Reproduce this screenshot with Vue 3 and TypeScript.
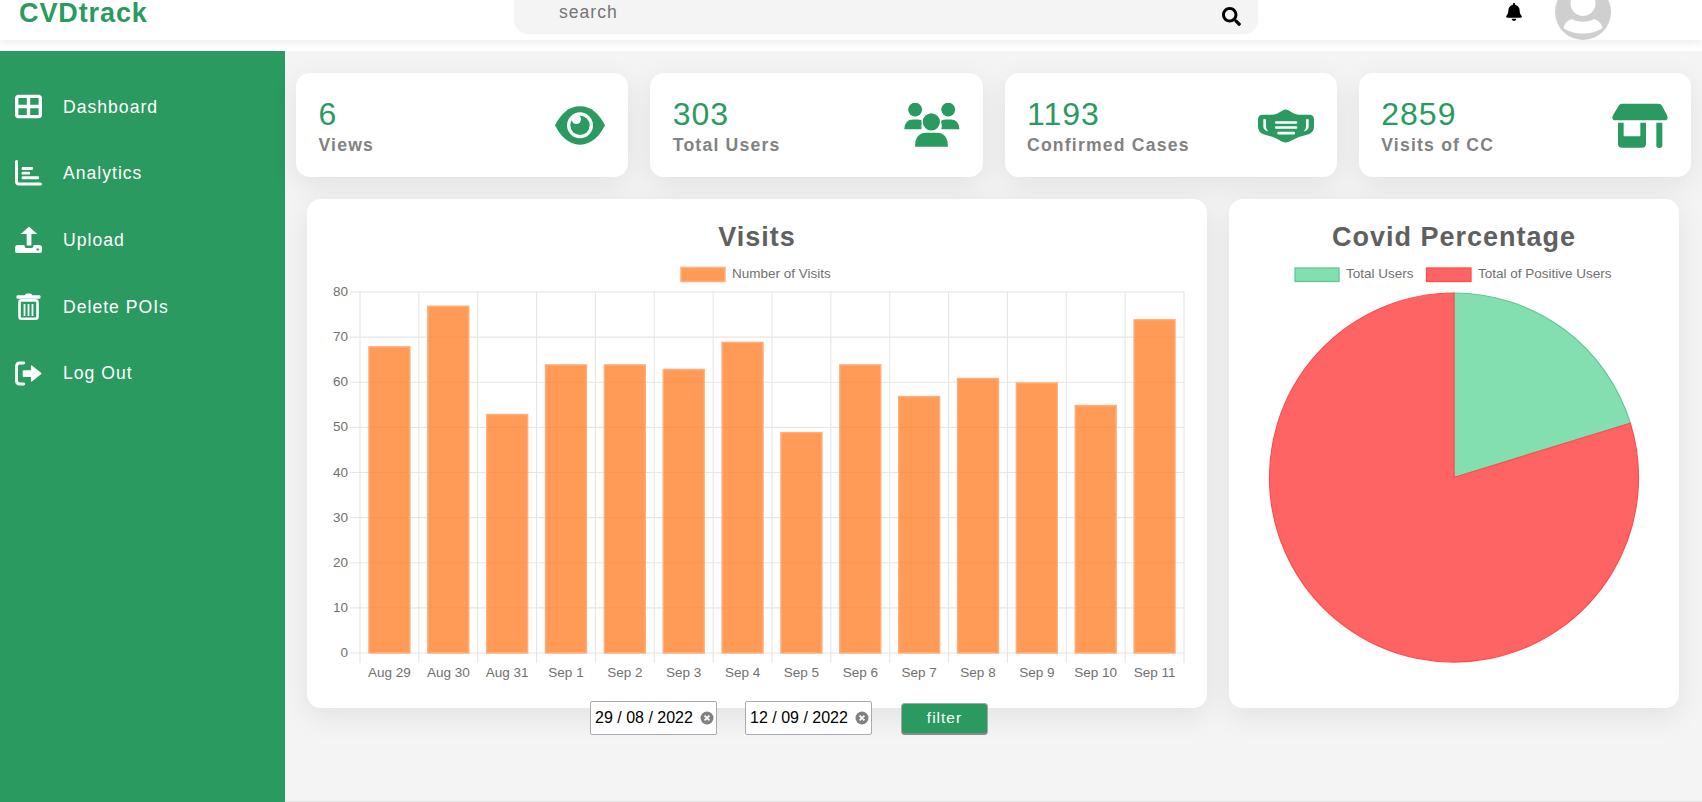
<template>
  <div class="page">
    <header class="topbar">
      <div class="logo">CVDtrack</div>
      <div class="search">
        <span class="search-text">search</span>
        <svg class="search-icon" viewBox="0 0 512 512"><path d="M505 442.7L405.3 343c-4.5-4.5-10.6-7-17-7H372c27.6-35.3 44-79.7 44-128C416 93.1 322.9 0 208 0S0 93.1 0 208s93.1 208 208 208c48.3 0 92.7-16.4 128-44v16.3c0 6.4 2.5 12.5 7 17l99.7 99.7c9.4 9.4 24.6 9.4 33.9 0l28.3-28.3c9.4-9.4 9.4-24.6.1-34zM208 336c-70.7 0-128-57.2-128-128 0-70.7 57.2-128 128-128 70.7 0 128 57.2 128 128 0 70.7-57.2 128-128 128z" /></svg>
      </div>
      <svg class="bell" viewBox="0 0 448 512"><path d="M224 512c35.32 0 63.97-28.65 63.97-64H160.03c0 35.35 28.65 64 63.97 64zm215.39-149.71c-19.32-20.76-55.47-51.99-55.47-154.29 0-77.7-54.48-139.9-127.94-155.16V32c0-17.67-14.32-32-31.98-32s-31.98 14.33-31.98 32v20.84C118.56 68.1 64.08 130.3 64.08 208c0 102.3-36.15 133.53-55.47 154.29-6 6.45-8.66 14.16-8.61 21.71.11 16.4 12.98 32 32.1 32h383.8c19.12 0 32-15.6 32.1-32 .05-7.55-2.61-15.27-8.61-21.71z" /></svg>
      <svg class="avatar" viewBox="0 16 56 40">
        <circle cx="28" cy="28" r="28" fill="#cfcfcf" />
        <circle cx="28" cy="19.5" r="12.5" fill="#fff" />
        <path d="M8.5 44 C9.5 39 13 36 17 35 C22 38.5 34 38.5 39 35 C43 36 46.5 39 47.5 44 C43 47.5 36 49.5 28 49.5 C20 49.5 13 47.5 8.5 44Z" fill="#fff" />
      </svg>
    </header>

    <div class="layout">
      <aside class="sidebar">
        <a class="nav-item">
          <svg class="nav-icon" viewBox="0 32 512 448"><path fill="#fff" d="M448 96V224H288V96H448zm0 192V416H288V288H448zM224 224H64V96H224V224zM64 288H224V416H64V288zM64 32C28.7 32 0 60.7 0 96V416c0 35.3 28.7 64 64 64H448c35.3 0 64-28.7 64-64V96c0-35.3-28.7-64-64-64H64z" /></svg>
          <span>Dashboard</span>
        </a>
        <a class="nav-item">
          <svg class="nav-icon" viewBox="0 0 27 24">
            <path d="M1.5 0V20Q1.5 22.5 4 22.5H25.5" fill="none" stroke="#fff" stroke-width="3" stroke-linecap="round" />
            <rect x="6.6" y="5.6" width="11.5" height="2.9" rx="1.2" fill="#fff" />
            <rect x="6.6" y="10.2" width="8.5" height="2.9" rx="1.2" fill="#fff" />
            <rect x="6.6" y="14.8" width="17.5" height="3" rx="1.2" fill="#fff" />
          </svg>
          <span>Analytics</span>
        </a>
        <a class="nav-item">
          <svg class="nav-icon" viewBox="0 0 27 27">
            <path d="M14 .7L22.3 8H16.4V19.5H11.7V8H5.7Z" fill="#fff" />
            <path d="M0 22Q0 19 3 19H9.5V20Q9.5 22 11.5 22H16.5Q18.5 22 18.5 20V19H24Q27 19 27 22V25Q27 27 25 27H2Q0 27 0 25Z" fill="#fff" />
            <circle cx="22.7" cy="23.4" r="1.2" fill="#2a9a61" />
          </svg>
          <span>Upload</span>
        </a>
        <a class="nav-item">
          <svg class="nav-icon" viewBox="0 0 24 27">
            <rect x="0" y="2.2" width="24" height="3.6" rx="1.2" fill="#fff" />
            <path d="M8 3Q8.5 .6 10.5 .6H13.5Q15.5 .6 16 3Z" fill="#fff" />
            <rect x="3" y="7.4" width="18" height="18.3" rx="2" fill="none" stroke="#fff" stroke-width="2.6" />
            <path d="M8 11V23M12 11V23M16 11V23" stroke="#fff" stroke-width="1.8" />
          </svg>
          <span>Delete POIs</span>
        </a>
        <a class="nav-item">
          <svg class="nav-icon" viewBox="0 0 28 25">
            <path d="M9 1.6H5Q1.6 1.6 1.6 5V20Q1.6 23.4 5 23.4H9" fill="none" stroke="#fff" stroke-width="3" stroke-linecap="round" />
            <path d="M9 9H16.5V4.6Q16.5 3.6 17.5 4.2L27 11.6Q28 12.5 27 13.4L17.5 20.8Q16.5 21.4 16.5 20.4V16H9Q8 16 8 15V10Q8 9 9 9Z" fill="#fff" />
          </svg>
          <span>Log Out</span>
        </a>
      </aside>

      <main class="content">
        <section class="stats">
          <div class="stat-card">
            <div class="stat-text">
              <div class="stat-num">6</div>
              <div class="stat-label">Views</div>
            </div>
            <svg class="stat-icon" width="50" height="39" viewBox="45 47 150 117">
              <path d="M45 105C62 72 85 48 120 48C155 48 178 72 195 105C178 138 155 163 120 163C85 163 62 138 45 105Z" fill="#2a9a61" />
              <circle cx="120" cy="105" r="39" fill="#fff" />
              <circle cx="120" cy="105" r="29" fill="#2a9a61" />
              <circle cx="109" cy="87" r="14" fill="#fff" />
            </svg>
          </div>
          <div class="stat-card">
            <div class="stat-text">
              <div class="stat-num">303</div>
              <div class="stat-label">Total Users</div>
            </div>
            <svg class="stat-icon" width="56" height="44" viewBox="40 40 168 133">
              <circle cx="73" cy="60" r="21" fill="#2a9a61" />
              <circle cx="173" cy="60" r="21" fill="#2a9a61" />
              <path d="M40 119Q42 90 66 90H82Q92 90 96 95Q90 105 92 119Z" fill="#2a9a61" />
              <path d="M207 119Q205 90 181 90H165Q155 90 150 95Q156 105 152 119Z" fill="#2a9a61" />
              <circle cx="122" cy="97" r="28" fill="#2a9a61" stroke="#fff" stroke-width="4" />
              <path d="M73 172Q72 130 108 130H138Q172 130 172 172Z" fill="#2a9a61" />
            </svg>
          </div>
          <div class="stat-card">
            <div class="stat-text">
              <div class="stat-num">1193</div>
              <div class="stat-label">Confirmed Cases</div>
            </div>
            <svg class="stat-icon mask" width="56" height="34" viewBox="52 55 168 101">
              <path d="M135 56C125 56 110 72 95 72H66Q52 72 52 86V108Q52 125 68 130L95 138C110 142 122 155 135 155C148 155 162 142 177 138L204 130Q220 125 220 108V86Q220 72 206 72H175C160 72 145 56 135 56Z" fill="#2a9a61" />
              <path d="M68 85H76V108Q76 117 83 122L74 118Q68 115 68 108Z" fill="#fff" />
              <path d="M204 85H196V108Q196 117 189 122L198 118Q204 115 204 108Z" fill="#fff" />
              <rect x="103" y="91" width="67" height="8" rx="3" fill="#fff" />
              <rect x="103" y="106" width="67" height="8" rx="3" fill="#fff" />
              <rect x="110" y="123" width="53" height="8" rx="3" fill="#fff" />
            </svg>
          </div>
          <div class="stat-card">
            <div class="stat-text">
              <div class="stat-num">2859</div>
              <div class="stat-label">Visits of CC</div>
            </div>
            <svg class="stat-icon" width="56" height="45" viewBox="65 38 168 135">
              <path d="M95 40H205Q212 40 215 46L230 75Q236 90 222 90H76Q62 90 68 75L85 46Q88 40 95 40Z" fill="#2a9a61" />
              <path d="M83 97H100V138H150V97H167V160Q167 172 155 172H95Q83 172 83 160Z" fill="#2a9a61" />
              <path d="M198 97H216V165Q216 173 207 173Q198 173 198 165Z" fill="#2a9a61" />
            </svg>
          </div>
        </section>

        <section class="charts">
          <div class="chart-card">
            <h2 class="chart-title">Visits</h2>
            <svg class="chart-svg" width="900" height="454" viewBox="0 0 900 454">
              <rect x="374" y="13.5" width="44" height="14" fill="#ff9a57" stroke="#ffae7d" stroke-width="1.5" />
              <text x="425" y="23.5" class="chart-text">Number of Visits</text>

              <g v-for="t in yTicks" :key="t.value">
                <line x1="43" :x2="plot.right" :y1="t.y" :y2="t.y" class="grid" />
                <text x="41" :y="t.y + 4" text-anchor="end" class="chart-text">{{ t.value }}</text>
              </g>
              <g v-for="(label, i) in xLabels" :key="label">
                <line :x1="xAt(i)" :x2="xAt(i)" :y1="plot.top" :y2="plot.bottom + 10" class="grid" />
                <text :x="xAt(i) + step / 2" y="423" text-anchor="middle" class="chart-text">{{ label }}</text>
              </g>
              <line :x1="plot.right" :x2="plot.right" :y1="plot.top" :y2="plot.bottom + 10" class="grid" />

              <rect
                v-for="b in bars"
                :key="b.x"
                :x="b.x"
                :y="b.y"
                :width="b.w"
                :height="b.h"
                fill="rgba(255,129,45,0.8)"
                stroke="#ffae7d"
                stroke-width="1.4"
              />
            </svg>
          </div>

          <div class="chart-card">
            <h2 class="chart-title">Covid Percentage</h2>
            <svg class="chart-svg" width="450" height="454" viewBox="0 0 450 454">
              <rect x="66" y="14" width="44" height="13.5" fill="#84dfb0" stroke="#62c795" stroke-width="1.3" />
              <text x="117" y="23.5" class="chart-text">Total Users</text>
              <rect x="197.5" y="14" width="44.5" height="13.5" fill="#ff6464" stroke="#ff4d4d" stroke-width="1.3" />
              <text x="249" y="23.5" class="chart-text">Total of Positive Users</text>

              <path :d="greenSlice" fill="#84dfb0" stroke="#62c795" stroke-width="1.2" />
              <path :d="redSlice" fill="#ff6464" stroke="#ff4d4d" stroke-width="1.2" />
            </svg>
          </div>
        </section>

        <div class="filters">
          <div class="date-field">
            <span>29 / 08 / 2022</span>
            <svg class="clear" viewBox="0 0 14 14"><circle cx="7" cy="7" r="6.5" fill="#808080" /><path d="M4.6 4.6L9.4 9.4M9.4 4.6L4.6 9.4" stroke="#fff" stroke-width="1.8" /></svg>
          </div>
          <div class="date-field">
            <span>12 / 09 / 2022</span>
            <svg class="clear" viewBox="0 0 14 14"><circle cx="7" cy="7" r="6.5" fill="#808080" /><path d="M4.6 4.6L9.4 9.4M9.4 4.6L4.6 9.4" stroke="#fff" stroke-width="1.8" /></svg>
          </div>
          <button class="filter-btn">filter</button>
        </div>
      </main>
    </div>
  </div>
</template>

<script setup lang="ts">
const visits = [68, 77, 53, 64, 64, 63, 69, 49, 64, 57, 61, 60, 55, 74]
const xLabels = [
  'Aug 29', 'Aug 30', 'Aug 31', 'Sep 1', 'Sep 2', 'Sep 3', 'Sep 4',
  'Sep 5', 'Sep 6', 'Sep 7', 'Sep 8', 'Sep 9', 'Sep 10', 'Sep 11'
]

// plot area inside the bar chart svg
const plot = { left: 53, right: 877, top: 38, bottom: 399 }
const step = (plot.right - plot.left) / visits.length
const xAt = (i: number) => plot.left + step * i
const yAt = (v: number) => plot.bottom - ((plot.bottom - plot.top) * v) / 80

const yTicks = [0, 10, 20, 30, 40, 50, 60, 70, 80].map((value) => ({ value, y: yAt(value) }))

// stroke sits inside the bar, so pull the rect in by half its width
const inset = 0.7
const bars = visits.map((v, i) => ({
  x: xAt(i) + step * 0.14 + inset,
  y: yAt(v) + inset,
  w: step * 0.72 - inset * 2,
  h: plot.bottom - yAt(v) - inset
}))

// pie
const cx = 225
const cy = 223.5
const r = 184.5
const share = 303 / (303 + 1193)
const endAngle = share * Math.PI * 2
const ex = cx + r * Math.sin(endAngle)
const ey = cy - r * Math.cos(endAngle)
const greenSlice = `M${cx} ${cy}L${cx} ${cy - r}A${r} ${r} 0 0 1 ${ex} ${ey}Z`
const redSlice = `M${cx} ${cy}L${ex} ${ey}A${r} ${r} 0 1 1 ${cx} ${cy - r}Z`
</script>

<style scoped>
.page {
  display: flex;
  flex-direction: column;
  height: 802px;
  overflow: hidden;
  background: #fff;
  font-family: "Liberation Sans", Arial, sans-serif;
}

.topbar {
  position: relative;
  z-index: 2;
  flex: 0 0 40px;
  display: flex;
  align-items: flex-start;
  padding-left: 19px;
  background: #fff;
  box-shadow: 0 1px 10px rgba(0, 0, 0, 0.1);
}

.logo {
  flex: 0 0 495px;
  font-size: 27px;
  font-weight: 700;
  line-height: 26px;
  letter-spacing: 0.9px;
  color: #2a9a61;
}

.search {
  flex: 0 0 744px;
  height: 34px;
  display: flex;
  align-items: flex-start;
  justify-content: space-between;
  padding: 0 17px 0 45px;
  box-sizing: border-box;
  background: #f4f4f4;
  border-radius: 0 0 14px 14px;
}

.search-text {
  font-size: 17.6px;
  line-height: 24px;
  letter-spacing: 1px;
  color: #757575;
}

.search-icon {
  width: 19px;
  height: 19px;
  margin-top: 7px;
}

.bell {
  width: 16px;
  height: 18px;
  margin: 3px 0 0 248px;
}

.avatar {
  width: 56px;
  height: 40px;
  margin-left: 33px;
}

.layout {
  flex: 1;
  display: flex;
  margin-top: 11px;
  min-height: 0;
}

.sidebar {
  flex: 0 0 285px;
  padding: 23px 0 0 15px;
  box-sizing: border-box;
  background: #2a9a61;
}

.nav-item {
  display: flex;
  align-items: center;
  gap: 21px;
  height: 66.6px;
  font-size: 17.6px;
  letter-spacing: 1px;
  color: #fff;
}

.nav-icon {
  flex: 0 0 27px;
  width: 27px;
  height: 27px;
  margin-top: -1px;
}

.content {
  flex: 1;
  min-width: 0;
  padding: 22px 11px 0;
  background: #f4f4f4;
  border-bottom: 1px solid #e0e0e0;
}

.stats {
  display: grid;
  grid-template-columns: repeat(4, 1fr);
  gap: 22px;
}

.stat-card {
  display: flex;
  align-items: center;
  justify-content: space-between;
  height: 104px;
  padding: 0 23px 0 22.5px;
  box-sizing: border-box;
  background: #fff;
  border-radius: 14px;
  box-shadow: 0 8px 30px rgba(0, 0, 0, 0.08);
}

.stat-icon.mask {
  margin-top: 2px;
}

.stat-num {
  font-size: 32px;
  line-height: 37px;
  letter-spacing: 1px;
  color: #2a9a61;
}

.stat-label {
  margin-top: 2px;
  font-size: 17.6px;
  font-weight: 700;
  line-height: 20px;
  letter-spacing: 1.2px;
  color: #828282;
}

.charts {
  display: grid;
  grid-template-columns: 900px 450px;
  gap: 22px;
  margin: 22px 0 0 11px;
}

.chart-card {
  height: 509px;
  background: #fff;
  border-radius: 14px;
  box-shadow: 0 8px 30px rgba(0, 0, 0, 0.08);
}

.chart-title {
  margin: 0;
  padding-top: 21px;
  height: 34px;
  font-size: 27px;
  font-weight: 700;
  line-height: 34px;
  letter-spacing: 1px;
  text-align: center;
  color: #606060;
}

.chart-svg {
  display: block;
}

.chart-text {
  font-family: "Liberation Sans", Arial, sans-serif;
  font-size: 13.5px;
  fill: #707070;
}

.grid {
  stroke: #e6e6e6;
  stroke-width: 1.1;
}

.filters {
  position: relative;
  display: flex;
  align-items: flex-end;
  gap: 28.5px;
  margin-top: -7px;
  padding-left: 294px;
}

.date-field {
  display: flex;
  align-items: center;
  justify-content: space-between;
  width: 126.5px;
  height: 34px;
  padding: 0 2px 0 4px;
  box-sizing: border-box;
  background: #fff;
  border: 1px solid #a9a9b3;
  border-radius: 2px;
  font-size: 16px;
  color: #000;
}

.clear {
  width: 14px;
  height: 14px;
}

.filter-btn {
  width: 87px;
  height: 32px;
  margin-left: 1px;
  padding: 0 0 2px;
  background: #2a9a61;
  border: 1px solid #a5a5a5;
  border-bottom: 2px solid #8a8a8a;
  border-radius: 4px;
  font-family: inherit;
  font-size: 15.5px;
  letter-spacing: 1px;
  color: #fff;
}
</style>

<style>
body {
  margin: 0;
}
</style>
